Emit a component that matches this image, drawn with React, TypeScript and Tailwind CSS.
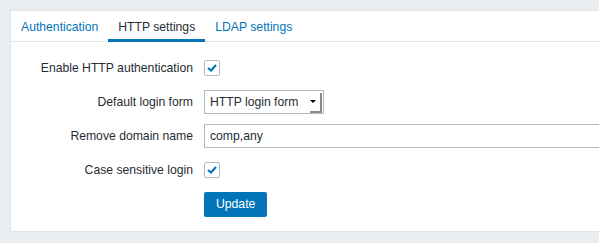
export default function App() {
  return (
    <div className="w-[599px] h-[243px] overflow-hidden bg-[#ebeef0] pt-[10px] pl-[10px] font-['Liberation_Sans',Arial,sans-serif] text-[12.2px] text-[#1f2c33]">
      <div className="w-[700px] h-[222px] bg-white border border-[#dfe4e7]">
        {/* Tabs */}
        <div className="flex h-[31px] border-b border-[#dfe4e7]">
          <Tab label="Authentication" />
          <Tab label="HTTP settings" active />
          <Tab label="LDAP settings" />
        </div>

        {/* Form */}
        <div className="pt-[14px] flex flex-col gap-[10px]">
          <Row label="Enable HTTP authentication">
            <Checkbox />
          </Row>
          <Row label="Default login form">
            <div className="relative w-[120px] h-[24px] border border-[#acbbc4] flex items-center pl-[5px]">
              <span>HTTP login form</span>
              <span className="absolute right-[1px] top-[2px] w-[12px] h-[20px] border-r-2 border-b-2 border-[#8a8a8a]" />
              <span className="absolute right-[7px] top-[9px] w-0 h-0 border-l-[3px] border-r-[3px] border-t-[3px] border-l-transparent border-r-transparent border-t-black" />
            </div>
          </Row>
          <Row label="Remove domain name">
            <input
              defaultValue="comp,any"
              className="w-[453px] h-[24px] border border-[#acbbc4] px-[5px] text-[12.2px] text-[#1f2c33] outline-none"
            />
          </Row>
          <Row label="Case sensitive login">
            <Checkbox />
          </Row>
          <Row label="">
            <button className="h-[25px] px-[12px] bg-[#0275b8] rounded-[2px] text-white text-[12.2px]">
              Update
            </button>
          </Row>
        </div>
      </div>
    </div>
  );
}

function Tab({ label, active }: { label: string; active?: boolean }) {
  return (
    <div
      className={`px-[10px] h-[31px] flex items-center ${
        active ? "border-b-[3px] border-[#0275b8] text-[#1f2c33] pt-[5px]" : "text-[#0275b8] pt-[2px]"
      }`}
    >
      {label}
    </div>
  );
}

function Row({ label, children }: { label: string; children: React.ReactNode }) {
  return (
    <div className="flex items-center h-[24px]">
      <div className="w-[182px] text-right">{label}</div>
      <div className="ml-[11px] flex items-center">{children}</div>
    </div>
  );
}

function Checkbox() {
  return (
    <div className="w-[16px] h-[16px] border border-[#acbbc4] rounded-[2px] flex items-center justify-center">
      <svg width="10" height="8" viewBox="0 0 10 8">
        <path d="M1 4 L4 6.5 L9 1" fill="none" stroke="#0275b8" strokeWidth="2.2" />
      </svg>
    </div>
  );
}
